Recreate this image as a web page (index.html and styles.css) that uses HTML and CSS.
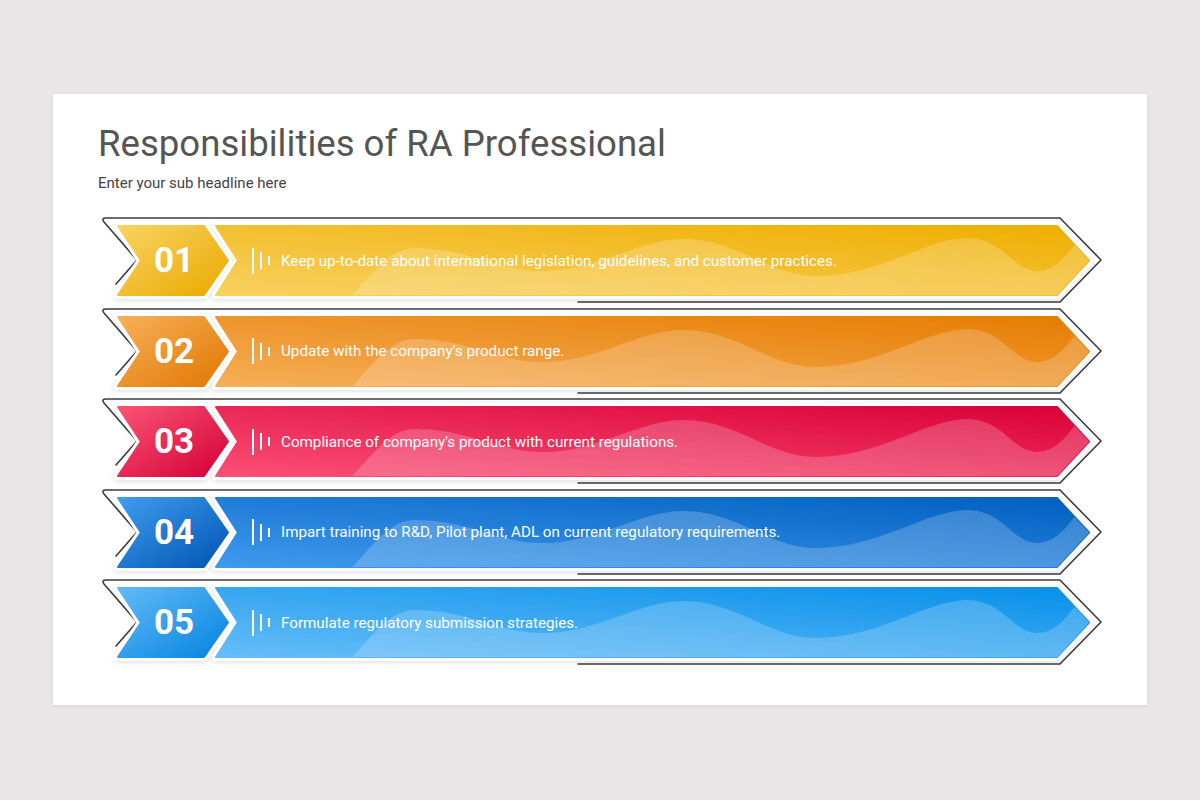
FILE: index.html
```html
<!DOCTYPE html>
<html lang="en">
<head>
<meta charset="utf-8">
<title>Responsibilities of RA Professional</title>
<link rel="stylesheet" href="styles.css">
</head>
<body>
<div class="card">
  <h1 class="title">Responsibilities of RA Professional</h1>
  <p class="subtitle">Enter your sub headline here</p>
  <div class="rows">

    <div class="row">
      <svg class="row-bg" width="1006" height="91" viewBox="0 0 1006 91">
        <defs>
          <linearGradient id="b1" x1="0" y1="1" x2="1" y2="0"><stop offset="0" stop-color="#f9d160"/><stop offset="1" stop-color="#efae00"/></linearGradient>
          <linearGradient id="n1" x1="0" y1="0" x2="1" y2="1"><stop offset="0" stop-color="#f9d362"/><stop offset="1" stop-color="#eaa900"/></linearGradient>
          <clipPath id="c1"><path d="M118,10 L959,10 L991,44.5 L959,79 L118,79 L140,44.5 Z"/></clipPath>
          <filter id="s1" x="-5%" y="-30%" width="110%" height="160%"><feDropShadow dx="0" dy="1.5" stdDeviation="2.5" flood-color="#000" flood-opacity="0.12"/></filter>
        </defs>
        <path class="outline" d="M18,68 L39,44 L6,6 Q3,2 8,2 L962,2 L1003,44 L962,86 L480,86"/>
        <g filter="url(#s1)">
          <path class="halo" d="M20,10 L106,10 L130,44.5 L106,79 L20,79 L43,44.5 Z"/>
          <path class="halo" d="M118,10 L959,10 L991,44.5 L959,79 L118,79 L140,44.5 Z"/>
        </g>
        <path class="shape" d="M20,10 L106,10 L130,44.5 L106,79 L20,79 L43,44.5 Z" fill="url(#n1)" stroke="url(#n1)"/>
        <path class="shape" d="M118,10 L959,10 L991,44.5 L959,79 L118,79 L140,44.5 Z" fill="url(#b1)" stroke="url(#b1)"/>
        <path class="wave" clip-path="url(#c1)" d="M252,82 C280,50 295,32 317,32 C370,32 400,55 445,55 C500,55 540,23 585,23 C640,23 670,60 719,60 C780,60 830,22 869,22 C905,22 915,55 939,55 C960,55 972,35 990,10 L1010,0 L1010,90 L252,90 Z"/>
      </svg>
      <div class="row-content">
        <span class="num">01</span>
        <span class="ticks"><i class="t1"></i><i class="t2"></i><i class="t3"></i></span>
        <span class="label">Keep up-to-date about international legislation, guidelines, and customer practices.</span>
      </div>
    </div>

    <div class="row">
      <svg class="row-bg" width="1006" height="91" viewBox="0 0 1006 91">
        <defs>
          <linearGradient id="b2" x1="0" y1="1" x2="1" y2="0"><stop offset="0" stop-color="#f6ae58"/><stop offset="1" stop-color="#e67c00"/></linearGradient>
          <linearGradient id="n2" x1="0" y1="0" x2="1" y2="1"><stop offset="0" stop-color="#f6b05a"/><stop offset="1" stop-color="#e27600"/></linearGradient>
          <clipPath id="c2"><path d="M118,10 L959,10 L991,44.5 L959,79 L118,79 L140,44.5 Z"/></clipPath>
          <filter id="s2" x="-5%" y="-30%" width="110%" height="160%"><feDropShadow dx="0" dy="1.5" stdDeviation="2.5" flood-color="#000" flood-opacity="0.12"/></filter>
        </defs>
        <path class="outline" d="M18,68 L39,44 L6,6 Q3,2 8,2 L962,2 L1003,44 L962,86 L480,86"/>
        <g filter="url(#s2)">
          <path class="halo" d="M20,10 L106,10 L130,44.5 L106,79 L20,79 L43,44.5 Z"/>
          <path class="halo" d="M118,10 L959,10 L991,44.5 L959,79 L118,79 L140,44.5 Z"/>
        </g>
        <path class="shape" d="M20,10 L106,10 L130,44.5 L106,79 L20,79 L43,44.5 Z" fill="url(#n2)" stroke="url(#n2)"/>
        <path class="shape" d="M118,10 L959,10 L991,44.5 L959,79 L118,79 L140,44.5 Z" fill="url(#b2)" stroke="url(#b2)"/>
        <path class="wave" clip-path="url(#c2)" d="M252,82 C280,50 295,32 317,32 C370,32 400,55 445,55 C500,55 540,23 585,23 C640,23 670,60 719,60 C780,60 830,22 869,22 C905,22 915,55 939,55 C960,55 972,35 990,10 L1010,0 L1010,90 L252,90 Z"/>
      </svg>
      <div class="row-content">
        <span class="num">02</span>
        <span class="ticks"><i class="t1"></i><i class="t2"></i><i class="t3"></i></span>
        <span class="label">Update with the company's product range.</span>
      </div>
    </div>

    <div class="row">
      <svg class="row-bg" width="1006" height="91" viewBox="0 0 1006 91">
        <defs>
          <linearGradient id="b3" x1="0" y1="1" x2="1" y2="0"><stop offset="0" stop-color="#fb4f76"/><stop offset="1" stop-color="#da0036"/></linearGradient>
          <linearGradient id="n3" x1="0" y1="0" x2="1" y2="1"><stop offset="0" stop-color="#fa5474"/><stop offset="1" stop-color="#d30036"/></linearGradient>
          <clipPath id="c3"><path d="M118,10 L959,10 L991,44.5 L959,79 L118,79 L140,44.5 Z"/></clipPath>
          <filter id="s3" x="-5%" y="-30%" width="110%" height="160%"><feDropShadow dx="0" dy="1.5" stdDeviation="2.5" flood-color="#000" flood-opacity="0.12"/></filter>
        </defs>
        <path class="outline" d="M18,68 L39,44 L6,6 Q3,2 8,2 L962,2 L1003,44 L962,86 L480,86"/>
        <g filter="url(#s3)">
          <path class="halo" d="M20,10 L106,10 L130,44.5 L106,79 L20,79 L43,44.5 Z"/>
          <path class="halo" d="M118,10 L959,10 L991,44.5 L959,79 L118,79 L140,44.5 Z"/>
        </g>
        <path class="shape" d="M20,10 L106,10 L130,44.5 L106,79 L20,79 L43,44.5 Z" fill="url(#n3)" stroke="url(#n3)"/>
        <path class="shape" d="M118,10 L959,10 L991,44.5 L959,79 L118,79 L140,44.5 Z" fill="url(#b3)" stroke="url(#b3)"/>
        <path class="wave" clip-path="url(#c3)" d="M252,82 C280,50 295,32 317,32 C370,32 400,55 445,55 C500,55 540,23 585,23 C640,23 670,60 719,60 C780,60 830,22 869,22 C905,22 915,55 939,55 C960,55 972,35 990,10 L1010,0 L1010,90 L252,90 Z"/>
      </svg>
      <div class="row-content">
        <span class="num">03</span>
        <span class="ticks"><i class="t1"></i><i class="t2"></i><i class="t3"></i></span>
        <span class="label">Compliance of company's product with current regulations.</span>
      </div>
    </div>

    <div class="row">
      <svg class="row-bg" width="1006" height="91" viewBox="0 0 1006 91">
        <defs>
          <linearGradient id="b4" x1="0" y1="1" x2="1" y2="0"><stop offset="0" stop-color="#3f9aee"/><stop offset="1" stop-color="#005fc0"/></linearGradient>
          <linearGradient id="n4" x1="0" y1="0" x2="1" y2="1"><stop offset="0" stop-color="#409cf0"/><stop offset="1" stop-color="#0054b0"/></linearGradient>
          <clipPath id="c4"><path d="M118,10 L959,10 L991,44.5 L959,79 L118,79 L140,44.5 Z"/></clipPath>
          <filter id="s4" x="-5%" y="-30%" width="110%" height="160%"><feDropShadow dx="0" dy="1.5" stdDeviation="2.5" flood-color="#000" flood-opacity="0.12"/></filter>
        </defs>
        <path class="outline" d="M18,68 L39,44 L6,6 Q3,2 8,2 L962,2 L1003,44 L962,86 L480,86"/>
        <g filter="url(#s4)">
          <path class="halo" d="M20,10 L106,10 L130,44.5 L106,79 L20,79 L43,44.5 Z"/>
          <path class="halo" d="M118,10 L959,10 L991,44.5 L959,79 L118,79 L140,44.5 Z"/>
        </g>
        <path class="shape" d="M20,10 L106,10 L130,44.5 L106,79 L20,79 L43,44.5 Z" fill="url(#n4)" stroke="url(#n4)"/>
        <path class="shape" d="M118,10 L959,10 L991,44.5 L959,79 L118,79 L140,44.5 Z" fill="url(#b4)" stroke="url(#b4)"/>
        <path class="wave" clip-path="url(#c4)" d="M252,82 C280,50 295,32 317,32 C370,32 400,55 445,55 C500,55 540,23 585,23 C640,23 670,60 719,60 C780,60 830,22 869,22 C905,22 915,55 939,55 C960,55 972,35 990,10 L1010,0 L1010,90 L252,90 Z"/>
      </svg>
      <div class="row-content">
        <span class="num">04</span>
        <span class="ticks"><i class="t1"></i><i class="t2"></i><i class="t3"></i></span>
        <span class="label">Impart training to R&amp;D, Pilot plant, ADL on current regulatory requirements.</span>
      </div>
    </div>

    <div class="row">
      <svg class="row-bg" width="1006" height="91" viewBox="0 0 1006 91">
        <defs>
          <linearGradient id="b5" x1="0" y1="1" x2="1" y2="0"><stop offset="0" stop-color="#66bdf8"/><stop offset="1" stop-color="#0790ea"/></linearGradient>
          <linearGradient id="n5" x1="0" y1="0" x2="1" y2="1"><stop offset="0" stop-color="#62baf6"/><stop offset="1" stop-color="#0484e0"/></linearGradient>
          <clipPath id="c5"><path d="M118,10 L959,10 L991,44.5 L959,79 L118,79 L140,44.5 Z"/></clipPath>
          <filter id="s5" x="-5%" y="-30%" width="110%" height="160%"><feDropShadow dx="0" dy="1.5" stdDeviation="2.5" flood-color="#000" flood-opacity="0.12"/></filter>
        </defs>
        <path class="outline" d="M18,68 L39,44 L6,6 Q3,2 8,2 L962,2 L1003,44 L962,86 L480,86"/>
        <g filter="url(#s5)">
          <path class="halo" d="M20,10 L106,10 L130,44.5 L106,79 L20,79 L43,44.5 Z"/>
          <path class="halo" d="M118,10 L959,10 L991,44.5 L959,79 L118,79 L140,44.5 Z"/>
        </g>
        <path class="shape" d="M20,10 L106,10 L130,44.5 L106,79 L20,79 L43,44.5 Z" fill="url(#n5)" stroke="url(#n5)"/>
        <path class="shape" d="M118,10 L959,10 L991,44.5 L959,79 L118,79 L140,44.5 Z" fill="url(#b5)" stroke="url(#b5)"/>
        <path class="wave" clip-path="url(#c5)" d="M252,82 C280,50 295,32 317,32 C370,32 400,55 445,55 C500,55 540,23 585,23 C640,23 670,60 719,60 C780,60 830,22 869,22 C905,22 915,55 939,55 C960,55 972,35 990,10 L1010,0 L1010,90 L252,90 Z"/>
      </svg>
      <div class="row-content">
        <span class="num">05</span>
        <span class="ticks"><i class="t1"></i><i class="t2"></i><i class="t3"></i></span>
        <span class="label">Formulate regulatory submission strategies.</span>
      </div>
    </div>

  </div>
</div>
</body>
</html>
```

FILE: styles.css
```css
html, body {
  margin: 0;
  padding: 0;
}

body {
  background: #e8e6e7;
  font-family: Roboto, "Liberation Sans", sans-serif;
  width: 1200px;
  height: 800px;
  overflow: hidden;
}

.card {
  box-sizing: border-box;
  width: 1094px;
  height: 611px;
  margin: 94px 0 0 53px;
  padding: 28px 0 0 45px;
  background: #ffffff;
  box-shadow: 0 1px 4px rgba(0, 0, 0, 0.08);
}

.title {
  margin: 0;
  font-family: Roboto, "Liberation Sans", sans-serif;
  font-weight: 400;
  font-size: 36.6px;
  line-height: 43px;
  color: #555555;
}

.subtitle {
  margin: 8px 0 0;
  font-size: 15px;
  line-height: 20px;
  color: #444444;
}

.rows {
  margin-top: 23px;
  width: 1006px;
}

.row {
  position: relative;
  box-sizing: border-box;
  height: 90.5px;
  padding-top: 10px;
}

.row-bg {
  position: absolute;
  left: 0;
  top: 0;
  overflow: visible;
}

.outline {
  fill: none;
  stroke: #3c3c3c;
  stroke-width: 1.6;
  stroke-linejoin: round;
  stroke-linecap: round;
}

.halo {
  fill: #ffffff;
  stroke: #ffffff;
  stroke-width: 8;
  stroke-linejoin: round;
}

.shape {
  stroke-width: 2;
  stroke-linejoin: round;
}

.wave {
  fill: #ffffff;
  fill-opacity: 0.2;
}

.row-content {
  position: relative;
  display: flex;
  align-items: center;
  height: 69px;
  color: #ffffff;
}

.num {
  width: 112px;
  margin-left: 20px;
  text-align: center;
  font-weight: 700;
  font-size: 35px;
  line-height: 1;
}

.ticks {
  display: flex;
  align-items: center;
  gap: 6px;
  margin-left: 22px;
}

.ticks i {
  display: block;
  width: 2px;
  background: #ffffff;
}

.ticks .t1 { height: 26px; }
.ticks .t2 { height: 17px; }
.ticks .t3 { height: 9px; }

.label {
  margin-left: 11px;
  font-size: 15.2px;
  line-height: 20px;
  white-space: nowrap;
}
```
